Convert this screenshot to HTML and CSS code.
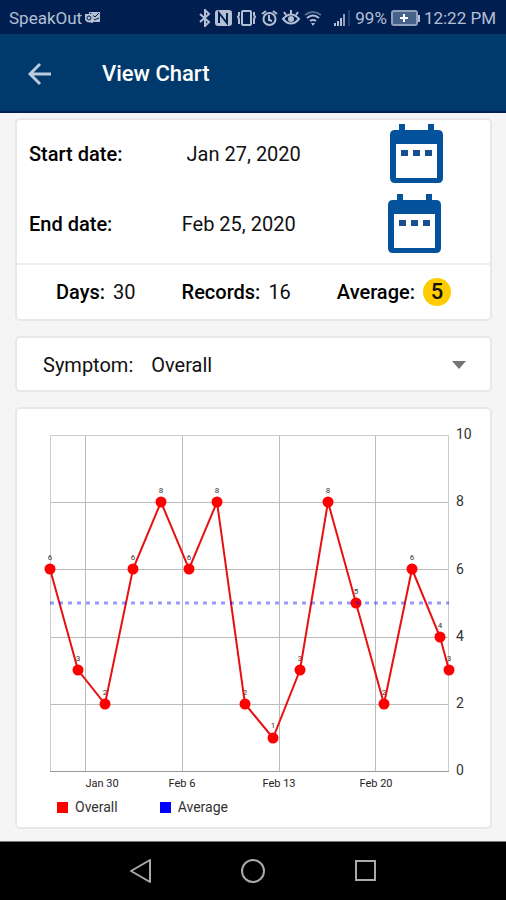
FILE: index.html
```html
<!DOCTYPE html>
<html lang="en">
<head>
<meta charset="utf-8">
<meta name="viewport" content="width=device-width, initial-scale=1">
<title>View Chart</title>
<link rel="stylesheet" href="styles.css">
</head>
<body>
<div class="status">
  <span>SpeakOut</span>
  <svg class="notice" width="17" height="14" viewBox="0 0 17 14"><path d="M5 1h11v10H5z" fill="#b4bfd3"/><path d="M6 2l5 4 4-4M10 9l5-2" fill="none" stroke="#001f50"/><path d="M1 3h8v9l-6-1-2-2z" fill="#b4bfd3"/><circle cx="5" cy="7" r="2" fill="none" stroke="#001f50"/></svg>
  <div class="tray">
    <svg width="12" height="18" viewBox="0 0 12 18"><path d="M1 5l9 8-4 4V1l4 4-9 8" fill="none" stroke="#b4bfd3" stroke-width="2"/></svg>
    <svg width="17" height="18" viewBox="0 0 17 18"><rect x="0" y="1" width="17" height="16" rx="3" fill="#b4bfd3"/><path d="M4 14V4l8 10V4" fill="none" stroke="#001f50" stroke-width="2"/></svg>
    <svg width="21" height="18" viewBox="0 0 21 18"><rect x="6" y="2" width="9" height="14" rx="1" fill="none" stroke="#b4bfd3" stroke-width="2"/><path d="M3 3v3l-1 2 1 2v5M18 3v3l1 2-1 2v5" fill="none" stroke="#b4bfd3" stroke-width="2"/></svg>
    <svg width="17" height="18" viewBox="0 0 17 18"><circle cx="8.500" cy="10" r="6" fill="none" stroke="#b4bfd3" stroke-width="2"/><path d="M1 5l4-3M16 5l-4-3M8 6v5l3 1" fill="none" stroke="#b4bfd3" stroke-width="2"/></svg>
    <svg width="18" height="18" viewBox="0 0 18 18"><path d="M1 10q8-9 16 0-8 9-16 0zM9 5V1M4 6L2 3M14 6l2-3" fill="none" stroke="#b4bfd3" stroke-width="2"/><circle cx="9" cy="10" r="3" fill="#b4bfd3"/></svg>
    <svg width="18" height="18" viewBox="0 0 18 18"><path d="M1 6q8-6 16 0" fill="none" stroke="#526b91" stroke-width="2"/><path d="M3 9q6-5 12 0M6 12q3-2 6 0" fill="none" stroke="#b4bfd3" stroke-width="2"/><path d="M7 14h4l-2 3z" fill="#b4bfd3"/></svg>
    <svg class="signal" width="17" height="18" viewBox="0 0 17 18"><path d="M0 14h2v3H0zM3 12h2v5H3zM6 9h2v8H6z" fill="#b4bfd3"/><path d="M9 5h2v12H9z" fill="#8fa0bc"/><path d="M14 1h2v16h-2z" fill="#23406d"/></svg>
    <span>99%</span>
    <svg class="battery" width="29" height="18" viewBox="0 0 29 18"><rect x="1" y="2" width="25" height="14" rx="2" fill="#44628a" stroke="#8fa0bc" stroke-width="2"/><path d="M27 6h2v7h-2z" fill="#b4bfd3"/><path d="M13 5v8M9 9h8" stroke="#fff" stroke-width="2"/></svg>
    <span>12:22 PM</span>
  </div>
</div>
<header class="appbar">
  <button class="back" aria-label="Back"><svg width="24" height="24" viewBox="0 0 24 24"><path d="M23 12H2M12 2L2 12l10 10" fill="none" stroke="#bccbdd" stroke-width="3"/></svg></button>
  <h1>View Chart</h1>
</header>
<main>
  <section class="card">
    <div class="date-row">
      <b class="date-label">Start date:</b><span class="date">Jan 27, 2020</span>
      <button class="calendar" aria-label="Choose start date"><svg width="53" height="60" viewBox="0 0 53 60"><path fill="#03529b" fill-rule="evenodd" d="M9 0h6v6h23V0h6v6h4q5 0 5 5v43q0 5-5 5H5q-5 0-5-5V11q0-5 5-5h4zM6 20v34h41V20z"/><path fill="#174f91" d="M11 26h7v6h-7zM23 26h7v6h-7zM35 26h7v6h-7z"/></svg></button>
    </div>
    <div class="date-row">
      <b class="date-label">End date:</b><span class="date">Feb 25, 2020</span>
      <button class="calendar" aria-label="Choose end date"><svg width="53" height="60" viewBox="0 0 53 60"><path fill="#03529b" fill-rule="evenodd" d="M9 0h6v6h23V0h6v6h4q5 0 5 5v43q0 5-5 5H5q-5 0-5-5V11q0-5 5-5h4zM6 20v34h41V20z"/><path fill="#174f91" d="M11 26h7v6h-7zM23 26h7v6h-7zM35 26h7v6h-7z"/></svg></button>
    </div>
    <div class="stats">
      <div class="stat"><b>Days:</b><span>30</span></div>
      <div class="stat"><b>Records:</b><span>16</span></div>
      <div class="stat"><b>Average:</b><span class="score">5</span></div>
    </div>
  </section>
  <section class="card symptom">
    <label for="symptom">Symptom:</label>
    <select id="symptom"><option>Overall</option></select>
    <svg class="caret" width="14" height="8" viewBox="0 0 14 8"><path d="M0 0h14L7 8z" fill="#747474"/></svg>
  </section>
  <section class="card chart">
    <svg class="plot" viewBox="0 0 473 390" role="img" aria-label="Overall symptom score by date">
      <path class="grid" d="M33 93.500H432M33 160.500H432M33 228.500H432M33 295.500H432M68.500 26V362M165.500 26V362M262.500 26V362M358.500 26V362"/>
      <path class="frame" d="M33.500 362V26.500H431.500V362"/>
      <path class="axis" d="M33 362.500H432"/>
      <g class="values">
        <text x="33" y="151">6</text><text x="61" y="252">3</text><text x="88" y="286">2</text><text x="116" y="151">6</text>
        <text x="144" y="84">8</text><text x="172" y="151">6</text><text x="200" y="84">8</text><text x="228" y="286">2</text>
        <text x="256" y="319">1</text><text x="283" y="252">3</text><text x="311" y="84">8</text><text x="339" y="185">5</text>
        <text x="367" y="286">2</text><text x="395" y="151">6</text><text x="423" y="219">4</text><text x="432" y="252">3</text>
      </g>
      <polyline class="series" points="33,160 61,261 88,295 116,160 144,93 172,160 200,93 228,295 256,329 283,261 311,93 339,194 367,295 395,160 423,228 432,261"/>
      <g class="dots">
        <circle cx="33" cy="160" r="5.500"/><circle cx="61" cy="261" r="5.500"/><circle cx="88" cy="295" r="5.500"/><circle cx="116" cy="160" r="5.500"/>
        <circle cx="144" cy="93" r="5.500"/><circle cx="172" cy="160" r="5.500"/><circle cx="200" cy="93" r="5.500"/><circle cx="228" cy="295" r="5.500"/>
        <circle cx="256" cy="329" r="5.500"/><circle cx="283" cy="261" r="5.500"/><circle cx="311" cy="93" r="5.500"/><circle cx="339" cy="194" r="5.500"/>
        <circle cx="367" cy="295" r="5.500"/><circle cx="395" cy="160" r="5.500"/><circle cx="423" cy="228" r="5.500"/><circle cx="432" cy="261" r="5.500"/>
      </g>
      <path class="average" d="M33 194H432"/>
      <g class="y-labels">
        <text x="439" y="30">10</text><text x="439" y="97">8</text><text x="439" y="165">6</text><text x="439" y="232">4</text><text x="439" y="299">2</text><text x="439" y="366">0</text>
      </g>
      <g class="x-labels">
        <text x="85" y="378">Jan 30</text><text x="165" y="378">Feb 6</text><text x="262" y="378">Feb 13</text><text x="359" y="378">Feb 20</text>
      </g>
    </svg>
    <div class="legend"><span class="key">Overall</span><span class="key key-average">Average</span></div>
  </section>
</main>
<nav>
  <button aria-label="Back"><svg width="24" height="24" viewBox="0 0 24 24"><path d="M21 1v22L2 12z" fill="none" stroke="#aaa" stroke-width="2" stroke-linejoin="round"/></svg></button>
  <button aria-label="Home"><svg width="24" height="24" viewBox="0 0 24 24"><circle cx="12" cy="12" r="11" fill="none" stroke="#aaa" stroke-width="2"/></svg></button>
  <button aria-label="Recent apps"><svg width="24" height="24" viewBox="0 0 24 24"><rect x="3" y="2" width="19" height="19" fill="none" stroke="#aaa" stroke-width="2"/></svg></button>
</nav>
</body>
</html>
```
FILE: styles.css
```css
* { box-sizing: border-box; }
body {
  margin: 0;
  min-height: 100vh;
  display: flex;
  flex-direction: column;
  background: #f5f5f5;
  color: #111;
  font: 20px/24px Roboto, sans-serif;
}
svg { display: block; flex: none; }
button { border: 0; padding: 0; background: none; cursor: pointer; }
b { font-weight: 500; color: #000; }

.status {
  display: flex;
  align-items: center;
  height: 34px;
  padding: 2px 10px 0 9px;
  background: #001f50;
  color: #b4bfd3;
  font-size: 17px;
}
.notice { margin-left: 2px; }
.tray { display: flex; align-items: center; gap: 4px; margin-left: auto; }
.signal { margin-left: 8px; }

.appbar {
  display: flex;
  align-items: center;
  gap: 50px;
  height: 79px;
  padding: 3px 0 0 28px;
  background: #003a6c;
  border-bottom: 2px solid #001f5a;
}
h1 { margin: 0; color: #fff; font-size: 22px; font-weight: 500; }

main {
  flex: 1;
  display: flex;
  flex-direction: column;
  gap: 15px;
  padding: 5px 14px 12px 15px;
}
.card { background: #fff; border: 2px solid #e8e8e8; border-radius: 5px; }
.date-row { display: flex; align-items: center; height: 70px; padding: 0 2px 2px 12px; }
.date-label, .date, .calendar { flex: 1 0 auto; }
.date { text-align: center; }
.calendar { display: flex; justify-content: center; padding: 0 24px 0 46px; }
.stats {
  display: flex;
  justify-content: center;
  align-items: center;
  gap: 46px;
  height: 56px;
  margin-top: 3px;
  border-top: 2px solid #eee;
}
.stat { display: flex; align-items: center; gap: 8px; }
.score {
  width: 28px;
  height: 28px;
  border-radius: 50%;
  background: #fc0;
  font-size: 22px;
  font-weight: 500;
  line-height: 28px;
  text-align: center;
}

.symptom { display: flex; align-items: center; height: 56px; padding: 2px 24px 0 26px; }
.symptom select {
  flex: 1;
  margin-left: 18px;
  padding: 0;
  border: 0;
  appearance: none;
  background: none;
  color: #111;
  font: inherit;
}
.caret { pointer-events: none; }

.plot { width: 100%; height: auto; }
.grid, .frame, .axis, .series, .average { fill: none; }
.grid { stroke: #bbb; }
.frame { stroke: #ccc; }
.axis { stroke: #999; }
.series { stroke: #e81010; stroke-width: 2px; }
.dots { fill: #f00; }
.average { stroke: #00f; stroke-opacity: 0.4; stroke-width: 3px; stroke-dasharray: 4 5; }
.values { fill: #333; font-size: 8px; text-anchor: middle; }
.y-labels { fill: #333; font-size: 14px; }
.x-labels { fill: #222; font-size: 11px; text-anchor: middle; }
.legend {
  display: flex;
  gap: 42px;
  padding: 0 0 12px 40px;
  color: #333;
  font-size: 14px;
  line-height: 16px;
}
.key { display: flex; align-items: center; gap: 7px; }
.key::before { content: ""; width: 11px; height: 11px; background: #f00; }
.key-average::before { background: #00f; }

nav {
  display: flex;
  justify-content: center;
  align-items: center;
  height: 59px;
  background: #000;
  border-top: 1px solid #777;
}
nav button { display: flex; justify-content: center; width: 112px; }
```
